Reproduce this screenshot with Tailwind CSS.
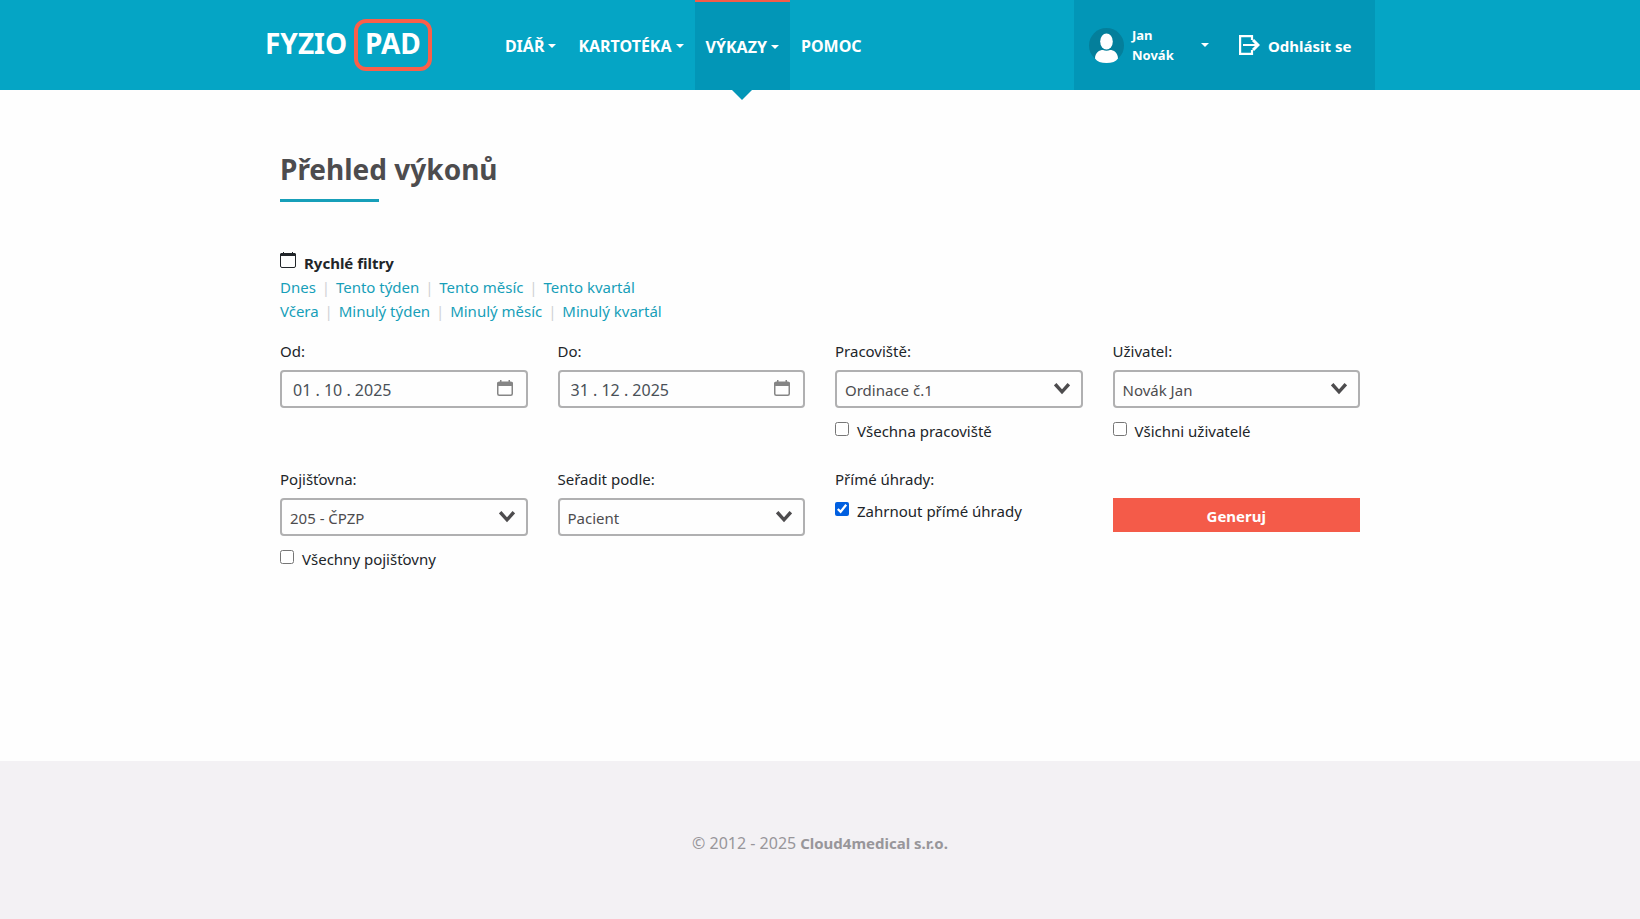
<!DOCTYPE html>
<html lang="cs">
<head>
<meta charset="utf-8">
<meta name="viewport" content="width=device-width, initial-scale=1">
<title>Přehled výkonů – FYZIOPAD</title>
<script src="https://cdn.jsdelivr.net/npm/@tailwindcss/browser@4"></script>
</head>
<body class="flex min-h-screen flex-col bg-[#fefefe] font-['Noto_Sans',sans-serif] text-[15px] leading-6 text-[#212529]">

<header class="bg-[#05a5c5] text-white">
  <div class="mx-auto flex max-w-[1140px] items-stretch px-[15px]">
    <a href="#" class="flex min-h-[90px] items-center gap-1 font-['Noto_Sans',sans-serif] text-[28px] leading-none font-bold" aria-label="FYZIO PAD">
      <span class="w-[85px] pb-1">FYZIO</span>
      <span class="rounded-xl border-4 border-[#fb5f49] px-[7px] pt-1.5 pb-2.5">PAD</span>
    </a>
    <nav class="ml-[62px] flex text-base font-bold">
      <a href="#" class="flex items-center gap-1 px-[11px] pt-px">DIÁŘ
        <svg class="w-2" viewBox="0 0 8 4" fill="currentColor" aria-hidden="true"><path d="M0 0h8L4 4z"/></svg></a>
      <a href="#" class="flex items-center gap-1 px-[11px] pt-px">KARTOTÉKA
        <svg class="w-2" viewBox="0 0 8 4" fill="currentColor" aria-hidden="true"><path d="M0 0h8L4 4z"/></svg></a>
      <a href="#" aria-current="page" class="relative flex items-center gap-1 border-t-2 border-[#f45b49] bg-[#0296b7] px-[11px] pt-px">VÝKAZY
        <svg class="w-2" viewBox="0 0 8 4" fill="currentColor" aria-hidden="true"><path d="M0 0h8L4 4z"/></svg>
        <svg class="absolute top-full left-1/2 w-5 -translate-x-1/2" viewBox="0 0 20 10" aria-hidden="true"><path d="M0 0h20L10 10z" fill="#0296b7"/></svg></a>
      <a href="#" class="flex items-center px-[11px] pt-px">POMOC</a>
    </nav>
    <div class="ml-auto flex w-[301px] items-center bg-[#0296b7] pl-[15px] font-bold">
      <button type="button" class="flex items-center text-left">
        <svg class="size-[35px]" viewBox="0 0 35 35" aria-hidden="true"><circle cx="17.5" cy="17.5" r="17.5" fill="#047f9b"/><ellipse cx="17.5" cy="13.5" rx="6.3" ry="8" fill="#fff"/><path d="M6 30.500c0-6 4.500-8.500 8-8.500 2 1 5 1 7 0 3.500 0 8 2.500 8 8.500-2 3-6 4.500-11.500 4.500S8 33.500 6 30.500z" fill="#fff"/></svg>
        <span class="ml-2 w-[69px] text-[13px] leading-5">Jan<br>Novák</span>
        <svg class="w-2" viewBox="0 0 8 4" fill="currentColor" aria-hidden="true"><path d="M0 0h8L4 4z"/></svg>
      </button>
      <a href="#" class="ml-[30px] flex items-center gap-2">
        <svg class="w-[21px]" viewBox="0 0 21 20" fill="none" stroke="currentColor" stroke-width="2.200" aria-hidden="true"><path d="M13 5V1.100H1.100v17.800H13V15M4 10h15"/><path d="M14 5l5 5-5 5" stroke-width="3"/></svg>
        <span class="pt-px">Odhlásit se</span></a>
    </div>
  </div>
</header>

<main class="mx-auto w-full max-w-[1140px] grow px-[30px] pt-[59px] pb-8">
  <h1 class="text-[28px] leading-10 font-bold text-[#4d4c4e]">Přehled výkonů</h1>
  <div class="mt-2.5 h-[3px] w-[99px] bg-[#179fb9]"></div>

  <section class="mt-[49px]">
    <h2 class="flex gap-2 font-bold"><svg class="mt-px size-4" viewBox="0 0 16 16" aria-hidden="true"><rect x=".5" y="1.500" width="15" height="14" rx="1.500" fill="none" stroke="#212529"/><path d="M0 4V2.500Q0 1 1.500 1H3V0h1v1h8V0h1v1h1.500Q16 1 16 2.500V4z" fill="#212529"/></svg>Rychlé filtry</h2>
    <div class="flex text-[#179fb9]">
      <a href="#">Dnes</a><span class="w-5 text-center text-[#d0d2d5]">|</span><a href="#">Tento týden</a><span class="w-5 text-center text-[#d0d2d5]">|</span><a href="#">Tento měsíc</a><span class="w-5 text-center text-[#d0d2d5]">|</span><a href="#">Tento kvartál</a>
    </div>
    <div class="flex text-[#179fb9]">
      <a href="#">Včera</a><span class="w-5 text-center text-[#d0d2d5]">|</span><a href="#">Minulý týden</a><span class="w-5 text-center text-[#d0d2d5]">|</span><a href="#">Minulý měsíc</a><span class="w-5 text-center text-[#d0d2d5]">|</span><a href="#">Minulý kvartál</a>
    </div>
  </section>

  <form class="mt-4 grid grid-cols-4 gap-x-[30px] gap-y-6">
    <div>
      <label for="od" class="block">Od:</label>
      <div class="mt-[7px] flex h-[38px] items-center rounded border-2 border-[#b0b0b1] pr-[13px] pl-[11px]">
        <input id="od" type="text" value="01 . 10 . 2025" class="min-w-0 grow pt-0.5 text-base text-[#495057] outline-none">
        <button type="button" aria-label="Vybrat datum od"><svg class="mb-0.5 size-4" viewBox="0 0 16 16" aria-hidden="true"><rect x=".75" y="2.250" width="14.500" height="13" rx="1.500" fill="none" stroke="#858585" stroke-width="1.500"/><path d="M0 6V3.500Q0 2 1.500 2H3V0h1.500v2h7V0H13v2h1.500Q16 2 16 3.500V6z" fill="#858585"/></svg></button>
      </div>
    </div>
    <div>
      <label for="do" class="block">Do:</label>
      <div class="mt-[7px] flex h-[38px] items-center rounded border-2 border-[#b0b0b1] pr-[13px] pl-[11px]">
        <input id="do" type="text" value="31 . 12 . 2025" class="min-w-0 grow pt-0.5 text-base text-[#495057] outline-none">
        <button type="button" aria-label="Vybrat datum do"><svg class="mb-0.5 size-4" viewBox="0 0 16 16" aria-hidden="true"><rect x=".75" y="2.250" width="14.500" height="13" rx="1.500" fill="none" stroke="#858585" stroke-width="1.500"/><path d="M0 6V3.500Q0 2 1.500 2H3V0h1.500v2h7V0H13v2h1.500Q16 2 16 3.500V6z" fill="#858585"/></svg></button>
      </div>
    </div>
    <div>
      <label for="pracoviste" class="block">Pracoviště:</label>
      <div class="relative mt-[7px]">
        <select id="pracoviste" class="block h-[38px] w-full appearance-none rounded border-2 border-[#b0b0b1] pt-0.5 pr-10 pl-2 text-[#4d4c4e]"><option>Ordinace č.1</option></select>
        <svg class="pointer-events-none absolute top-[13px] right-[13px] w-4" viewBox="0 0 16 12" aria-hidden="true"><path d="M1.200 1.200L8 8.800l6.800-7.600" fill="none" stroke="#4d4c4e" stroke-width="3.400"/></svg>
      </div>
      <label class="mt-[11px] flex gap-2"><input type="checkbox" class="mt-[3px] size-3.5">Všechna pracoviště</label>
    </div>
    <div>
      <label for="uzivatel" class="block">Uživatel:</label>
      <div class="relative mt-[7px]">
        <select id="uzivatel" class="block h-[38px] w-full appearance-none rounded border-2 border-[#b0b0b1] pt-0.5 pr-10 pl-2 text-[#4d4c4e]"><option>Novák Jan</option></select>
        <svg class="pointer-events-none absolute top-[13px] right-[13px] w-4" viewBox="0 0 16 12" aria-hidden="true"><path d="M1.200 1.200L8 8.800l6.800-7.600" fill="none" stroke="#4d4c4e" stroke-width="3.400"/></svg>
      </div>
      <label class="mt-[11px] flex gap-2"><input type="checkbox" class="mt-[3px] size-3.5">Všichni uživatelé</label>
    </div>
    <div>
      <label for="pojistovna" class="block">Pojišťovna:</label>
      <div class="relative mt-[7px]">
        <select id="pojistovna" class="block h-[38px] w-full appearance-none rounded border-2 border-[#b0b0b1] pt-0.5 pr-10 pl-2 text-[#4d4c4e]"><option>205 - ČPZP</option></select>
        <svg class="pointer-events-none absolute top-[13px] right-[13px] w-4" viewBox="0 0 16 12" aria-hidden="true"><path d="M1.200 1.200L8 8.800l6.800-7.600" fill="none" stroke="#4d4c4e" stroke-width="3.400"/></svg>
      </div>
      <label class="mt-[11px] flex gap-2"><input type="checkbox" class="mt-[3px] size-3.5">Všechny pojišťovny</label>
    </div>
    <div>
      <label for="razeni" class="block">Seřadit podle:</label>
      <div class="relative mt-[7px]">
        <select id="razeni" class="block h-[38px] w-full appearance-none rounded border-2 border-[#b0b0b1] pt-0.5 pr-10 pl-2 text-[#4d4c4e]"><option>Pacient</option></select>
        <svg class="pointer-events-none absolute top-[13px] right-[13px] w-4" viewBox="0 0 16 12" aria-hidden="true"><path d="M1.200 1.200L8 8.800l6.800-7.600" fill="none" stroke="#4d4c4e" stroke-width="3.400"/></svg>
      </div>
    </div>
    <fieldset>
      <legend class="block">Přímé úhrady:</legend>
      <label class="mt-2 flex gap-2"><input type="checkbox" checked class="mt-[3px] size-3.5 accent-[#005fe0]">Zahrnout přímé úhrady</label>
    </fieldset>
    <div class="pt-[31px]">
      <button type="submit" class="h-[34px] w-full bg-[#f45b49] pt-0.5 font-bold text-white">Generuj</button>
    </div>
  </form>
</main>

<footer class="bg-[#f3f1f4] pt-[70px] pb-16 text-center text-[#98969a]"><span class="text-base">© 2012 - 2025</span> <b>Cloud4medical s.r.o.</b></footer>
</body>
</html>
